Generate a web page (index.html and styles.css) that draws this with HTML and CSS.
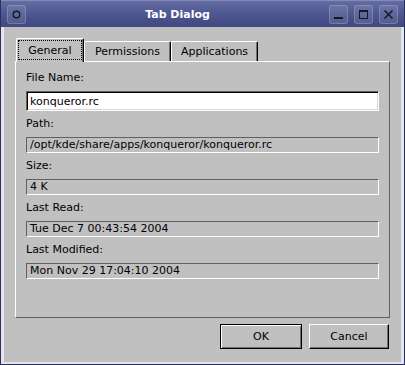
FILE: index.html
```html
<!DOCTYPE html>
<html lang="en">
<head>
  <meta charset="UTF-8">
  <title>Tab Dialog</title>
  <link rel="stylesheet" href="styles.css">
</head>
<body>
  <div class="window">
    <div class="titlebar">
      <span class="tb-btn">
        <svg width="19" height="19" viewBox="0 0 19 19"><circle cx="9.5" cy="9.5" r="3.3" fill="none" stroke="#14182e" stroke-width="1.4"/></svg>
      </span>
      <span class="title">Tab Dialog</span>
      <span class="tb-group">
        <span class="tb-btn">
          <svg width="19" height="19" viewBox="0 0 19 19"><rect x="5" y="12" width="9" height="2" fill="#14182e"/></svg>
        </span>
        <span class="tb-btn">
          <svg width="19" height="19" viewBox="0 0 19 19"><rect x="5.5" y="5.5" width="8" height="8" fill="none" stroke="#14182e" stroke-width="1"/><rect x="5" y="5" width="9" height="2" fill="#14182e"/></svg>
        </span>
        <span class="tb-btn">
          <svg width="19" height="19" viewBox="0 0 19 19"><path d="M5.5 5.5 L13.5 13.5 M13.5 5.5 L5.5 13.5" stroke="#14182e" stroke-width="1.5"/></svg>
        </span>
      </span>
    </div>

    <div class="client">
      <div class="tabs">
        <div class="tab active"><span class="focus">General</span></div>
        <div class="tab perm">Permissions</div>
        <div class="tab apps">Applications</div>
      </div>

      <div class="pane">
        <div class="label">File Name:</div>
        <input class="edit" type="text" value="konqueror.rc">
        <div class="label">Path:</div>
        <div class="field">/opt/kde/share/apps/konqueror/konqueror.rc</div>
        <div class="label">Size:</div>
        <div class="field">4 K</div>
        <div class="label">Last Read:</div>
        <div class="field">Tue Dec 7 00:43:54 2004</div>
        <div class="label">Last Modified:</div>
        <div class="field">Mon Nov 29 17:04:10 2004</div>
      </div>

      <div class="actions">
        <button class="btn default">OK</button>
        <button class="btn cancel">Cancel</button>
      </div>
    </div>
  </div>
</body>
</html>
```

FILE: styles.css
```css
body {
  margin: 0;
  padding: 0;
  font-family: "DejaVu Sans", sans-serif;
  font-size: 11px;
  color: #000;
  background-color: #2c3157;
}

.window {
  width: 405px;
  height: 365px;
  box-sizing: border-box;
  border: 1px solid #2c3157;
  border-top: 0;
  display: flex;
  flex-direction: column;
}

/* title bar */
.titlebar {
  height: 27px;
  box-sizing: border-box;
  border-top: 1px solid #838bbb;
  background: linear-gradient(#646ca3, #4a538b 60%, #3f4880);
  display: flex;
  align-items: center;
  padding: 0 6px;
}

.title {
  flex: 1;
  text-align: center;
  color: #fff;
  font-weight: bold;
  font-size: 11px;
}

.tb-group {
  display: flex;
  gap: 6px;
}

.tb-btn {
  width: 19px;
  height: 19px;
  box-sizing: border-box;
  border: 1px solid rgba(255, 255, 255, 0.18);
  border-radius: 3px;
  background-color: rgba(255, 255, 255, 0.1);
  display: flex;
  align-items: center;
  justify-content: center;
  overflow: hidden;
}

.tb-btn svg {
  flex: none;
}

/* dialog body */
.client {
  flex: 1;
  display: flex;
  flex-direction: column;
  background-color: #c0c0c0;
  border-left: 3px solid #e4e4ec;
  border-right: 3px solid #e4e4ec;
  border-bottom: 2px solid #e4e4ec;
  padding: 11px 11px 13px 11px;
}

.tabs {
  display: flex;
  align-items: flex-end;
  height: 23px;
  padding-left: 1px;
}

.tab {
  height: 20px;
  box-sizing: border-box;
  border-top: 1px solid #fff;
  border-left: 1px solid #fff;
  border-right: 1px solid #000;
  border-radius: 2px 2px 0 0;
  box-shadow: inset -1px 0 #707070;
  display: flex;
  align-items: center;
  justify-content: center;
  background-color: #c0c0c0;
}

.tab.active {
  position: relative;
  width: 68px;
  height: 24px;
  margin-bottom: -1px;
  align-items: stretch;
}

.tab.perm {
  width: 87px;
}

.tab.apps {
  width: 87px;
}

.focus {
  flex: 1;
  margin: 1px 1px 2px 1px;
  border: 1px dotted #000;
  display: flex;
  align-items: center;
  justify-content: center;
}

.pane {
  flex: 1;
  border: 1px solid;
  border-color: #fff #606060 #606060 #fff;
  padding: 3px 10px 0 10px;
  display: flex;
  flex-direction: column;
}

.label {
  line-height: 26px;
  height: 26px;
}

.edit {
  height: 20px;
  box-sizing: border-box;
  margin: 0;
  border: 1px solid;
  border-color: #606060 #fff #fff #606060;
  box-shadow: inset 1px 1px #000, inset -1px -1px #d8d8d8;
  background-color: #fff;
  font-family: "DejaVu Sans", sans-serif;
  font-size: 11px;
  padding: 0 3px;
  outline: none;
}

.field {
  height: 16px;
  box-sizing: border-box;
  border: 1px solid;
  border-color: #606060 #fff #fff #606060;
  line-height: 14px;
  padding-left: 3px;
  white-space: nowrap;
  overflow: hidden;
}

/* buttons */
.actions {
  display: flex;
  justify-content: flex-end;
  gap: 7px;
  margin-top: 6px;
  padding-right: 1px;
}

.btn {
  height: 25px;
  box-sizing: border-box;
  margin: 0;
  padding: 0;
  background-color: #c0c0c0;
  font-family: "DejaVu Sans", sans-serif;
  font-size: 11px;
  color: #000;
  border: 1px solid;
  border-color: #fff #000 #000 #fff;
  box-shadow: inset -1px -1px #707070;
}

.btn.default {
  width: 82px;
  border-color: #000;
  box-shadow: inset 1px 1px #fff, inset -1px -1px #707070;
}

.btn.cancel {
  width: 80px;
}
```
